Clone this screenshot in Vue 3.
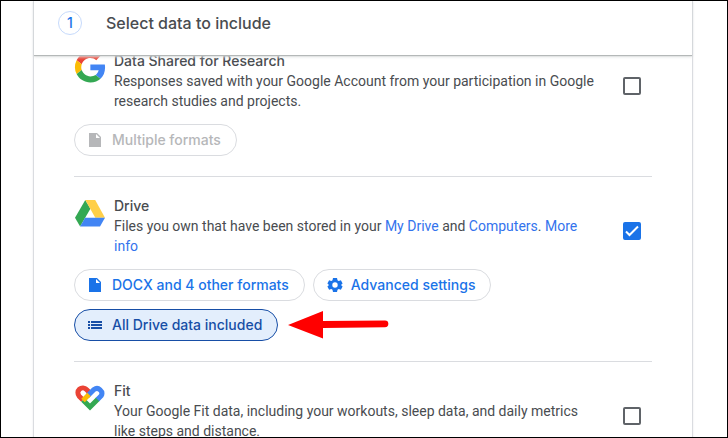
<script setup>
import { ref } from 'vue';

const products = ref([
  { id: 'research', name: 'Data Shared for Research', checked: false },
  { id: 'drive', name: 'Drive', checked: true },
  { id: 'fit', name: 'Fit', checked: false },
]);
</script>

<template>
  <div class="page">
    <main class="card">
      <header class="step">
        <span class="step-number">1</span>
        <h1>Select data to include</h1>
      </header>

      <ul class="products">
        <li v-for="item in products" :key="item.id" class="product">
          <div class="row">
            <svg v-if="item.id === 'research'" class="logo" viewBox="0 0 32 32">
              <g transform="translate(1 -.2) scale(.64)">
                <path fill="#ea4335" d="M24 9.5c3.54 0 6.71 1.22 9.21 3.6l6.85-6.85C35.9 2.38 30.47 0 24 0 14.62 0 6.51 5.38 2.56 13.22l7.98 6.19C12.43 13.72 17.74 9.5 24 9.5z" />
                <path fill="#4285f4" d="M46.98 24.55c0-1.57-.15-3.09-.38-4.55H24v9.02h12.94c-.58 2.96-2.26 5.48-4.78 7.18l7.73 6c4.51-4.18 7.09-10.36 7.09-17.65z" />
                <path fill="#fbbc05" d="M10.53 28.59a14.5 14.5 0 0 1 0-9.18l-7.98-6.19a24 24 0 0 0 0 21.56l7.98-6.19z" />
                <path fill="#34a853" d="M24 48c6.48 0 11.93-2.13 15.89-5.81l-7.73-6c-2.15 1.45-4.92 2.3-8.16 2.3-6.26 0-11.57-4.22-13.47-9.91l-7.98 6.19C6.51 42.62 14.62 48 24 48z" />
              </g>
            </svg>
            <svg v-else-if="item.id === 'drive'" class="logo" viewBox="0 0 32 32">
              <path fill="#34a853" d="M11.3 3 1 20.8 6.1 29.4 16.4 11.7z" />
              <path fill="#ffcf48" d="M11.3 3h9.9L31 20.8H21.3z" />
              <path fill="#4285f4" d="M11.1 20.8H31l-5 8.6H6.1z" />
            </svg>
            <svg v-else class="logo" viewBox="0 0 32 32">
              <g fill="none" stroke-width="5">
                <path stroke="#ea4335" d="M16.500 11.500 12.500 7.500A4.900 4.900 0 0 0 5.200 14.200L9 18" />
                <path stroke="#34a853" d="M9 18 16 25 24 17" />
                <path stroke="#4285f4" d="M13.500 14 20 7.500A4.900 4.900 0 0 1 27.200 13.800L23.500 17.500" />
                <path stroke="#fbbc04" d="M9 18.500 15 12.500" />
              </g>
            </svg>

            <div class="text">
              <h2 :id="item.id + '-name'">{{ item.name }}</h2>
              <p v-if="item.id === 'research'">
                Responses saved with your Google Account from your participation in Google research studies and projects.
              </p>
              <p v-else-if="item.id === 'drive'">
                Files you own that have been stored in your <a href="#">My Drive</a> and <a href="#">Computers</a>. <a href="#">More info</a>
              </p>
              <p v-else>
                Your Google Fit data, including your workouts, sleep data, and daily metrics like steps and distance.
              </p>
            </div>

            <div class="check">
              <input v-model="item.checked" type="checkbox" :aria-labelledby="item.id + '-name'" />
            </div>
          </div>

          <div v-if="item.id === 'research'" class="chips">
            <button type="button" class="chip" disabled>
              <svg viewBox="0 0 16 16"><path d="M1 1h8l4 4v10H1zM8 2v4h4z" fill-rule="evenodd" /></svg>
              Multiple formats
            </button>
          </div>

          <div v-if="item.id === 'drive'" class="chips">
            <button type="button" class="chip">
              <svg viewBox="0 0 16 16"><path d="M1 1h8l4 4v10H1zM8 2v4h4z" fill-rule="evenodd" /></svg>
              DOCX and 4 other formats
            </button>
            <button type="button" class="chip">
              <svg viewBox="0 0 16 16">
                <path fill-rule="evenodd" d="M6 1h4l.5 2.200 1.200.7 2.200-.7 1.700 3.200L14 8l1.600 1.600-1.700 3.200-2.200-.7-1.200.7L10 15H6l-.5-2.200-1.200-.7-2.200.7L.4 9.600 2 8 .4 6.400l1.700-3.200 2.200.7 1.200-.7zM8 5.300a2.700 2.700 0 1 0 0 5.400 2.700 2.700 0 0 0 0-5.400z" />
              </svg>
              Advanced settings
            </button>
            <div class="marked">
              <button type="button" class="chip active">
                <svg viewBox="0 0 16 16"><path d="M0 4h2v2H0zM3 4h11v2H3zM0 7h2v2H0zM3 7h11v2H3zM0 10h2v2H0zM3 10h11v2H3z" /></svg>
                All Drive data included
              </button>
              <svg class="arrow" viewBox="0 0 102 30">
                <path fill="#f00" d="M0 15 35 1v10l62-.5a3.300 3.300 0 0 1 0 6.700L35 18v10.500z" />
              </svg>
            </div>
          </div>
        </li>
      </ul>
    </main>
  </div>
</template>

<style>
body {
  margin: 0;
}
</style>

<style scoped>
.page {
  box-sizing: border-box;
  height: 100vh;
  padding: 0 34px 0 32px;
  border: 1px solid #000;
  overflow: hidden;
  background: #fff;
  color: #494c50;
  font: 14px/20px Roboto, "Noto Sans", sans-serif;
}

.card {
  border: 1px solid #dadce0;
  border-width: 0 1px;
  box-shadow: 0 0 2px #e8eaed;
}

.step {
  position: relative;
  z-index: 1;
  display: flex;
  align-items: center;
  gap: 24px;
  box-sizing: border-box;
  height: 54px;
  padding: 0 24px 10px;
  background: #fff;
  box-shadow: 0 1px 1px #b4b8b8, 0 2px 3px #e2e4e4;
}

.step-number {
  box-sizing: border-box;
  width: 24px;
  height: 24px;
  border: 1px solid #c6dafc;
  border-radius: 50%;
  color: #1a73e8;
  font: 500 14px/22px Inter, sans-serif;
  text-align: center;
}

h1 {
  margin: 0;
  font: 500 16px/24px Inter, sans-serif;
}

/* the first row is scrolled partly under the step header */
.products {
  margin: -23px 0 0;
  padding: 0 40px;
  list-style: none;
}

.product {
  padding: 19px 0 20px;
  border-bottom: 1px solid #dadce0;
}

.row {
  display: flex;
  align-items: flex-start;
  gap: 8px;
}

.logo {
  flex: none;
  width: 32px;
  height: 32px;
  margin-top: 1px;
}

.text {
  flex: 1;
  padding-right: 6px;
}

h2 {
  margin: 0;
  font: 500 14px/20px Inter, sans-serif;
}

p {
  margin: 0;
}

a {
  color: #3373ed;
  text-decoration: none;
}

.check {
  flex: none;
  margin-top: 15px;
  padding: 11px;
}

.check input {
  appearance: none;
  display: block;
  width: 18px;
  height: 18px;
  margin: 0;
  border: 2px solid #5f6368;
  border-radius: 2px;
}

.check input:checked {
  border-color: #1a73e8;
  background: #1a73e8 url("data:image/svg+xml,%3Csvg xmlns='http://www.w3.org/2000/svg' viewBox='0 0 14 14'%3E%3Cpath d='M1 7.500l3.500 3.500L13 2.500' fill='none' stroke='white' stroke-width='2'/%3E%3C/svg%3E");
}

.chips {
  display: flex;
  flex-wrap: wrap;
  gap: 8px;
  margin-top: 13px;
}

.chip {
  display: flex;
  align-items: center;
  gap: 8px;
  height: 32px;
  padding: 0 15px 0 13px;
  border: 1px solid #dadce0;
  border-radius: 16px;
  background: #fff;
  color: #1a73e8;
  font: 500 14px/20px Inter, sans-serif;
}

.chip svg {
  width: 16px;
  height: 16px;
  fill: currentColor;
}

.chip:disabled {
  color: #b6b7b9;
}

.chip.active {
  border-color: #174ea6;
  background: #e3eefc;
  color: #174ea6;
}

.marked {
  position: relative;
}

.arrow {
  position: absolute;
  top: 1px;
  left: calc(100% + 10px);
  width: 102px;
  height: 30px;
}
</style>
